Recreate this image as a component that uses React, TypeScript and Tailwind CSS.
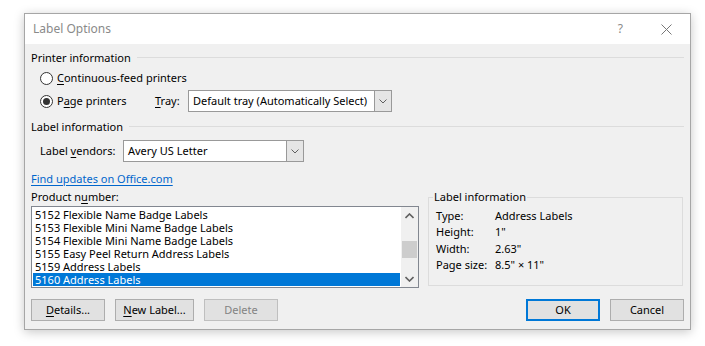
import React from 'react';

const Key = ({ children }: { children: React.ReactNode }) => (
  <span className="underline decoration-1 underline-offset-[2px]">{children}</span>
);

const SectionHeader = ({ title }: { title: string }) => (
  <div className="flex h-4 items-center">
    <span>{title}</span>
    <div className="ml-[6px] mt-[-1px] h-px flex-1 bg-[#dcdcdc]" />
  </div>
);

const Radio = ({ checked }: { checked?: boolean }) => (
  <span className="flex h-[13px] w-[13px] items-center justify-center rounded-full border border-[#333333] bg-white">
    {checked && <span className="h-[7px] w-[7px] rounded-full bg-[#333333]" />}
  </span>
);

const Chevron = ({ up }: { up?: boolean }) => (
  <svg width="9" height="6" viewBox="0 0 9 6" className="block">
    <path d={up ? 'M0.5 5 L4.5 1 L8.5 5' : 'M0.5 1 L4.5 5 L8.5 1'} fill="none" stroke="#606060" strokeWidth="1.6" />
  </svg>
);

const SmallChevron = () => (
  <svg width="8" height="5" viewBox="0 0 8 5" className="block">
    <path d="M0.5 0.5 L4 4 L7.5 0.5" fill="none" stroke="#606060" strokeWidth="1" />
  </svg>
);

const Combo = ({ value, className }: { value: string; className: string }) => (
  <div className={`flex h-[22px] border border-[#999999] bg-white ${className}`}>
    <span className="flex-1 truncate pl-[4px] leading-[20px]">{value}</span>
    <span className="flex w-[17px] items-center justify-center border-l border-[#999999] bg-[#e5e5e5]">
      <SmallChevron />
    </span>
  </div>
);

const products = [
  '5152 Flexible Name Badge Labels',
  '5153 Flexible Mini Name Badge Labels',
  '5154 Flexible Mini Name Badge Labels',
  '5155 Easy Peel Return Address Labels',
  '5159 Address Labels',
  '5160 Address Labels',
];

const details = [
  ['Type:', 'Address Labels'],
  ['Height:', '1"'],
  ['Width:', '2.63"'],
  ['Page size:', '8.5" × 11"'],
];

const Button = ({
  children,
  primary,
  disabled,
  className,
}: {
  children: React.ReactNode;
  primary?: boolean;
  disabled?: boolean;
  className: string;
}) => (
  <div
    className={`flex h-[22px] items-center justify-center bg-[#e1e1e1] ${
      primary ? 'border-2 border-[#0078d7]' : disabled ? 'border border-[#bfbfbf] text-[#838383]' : 'border border-[#adadad]'
    } ${className}`}
  >
    {children}
  </div>
);

export default function App() {
  return (
    <div className="h-[346px] w-[705px] overflow-hidden bg-white pl-[24px] pt-[13px] font-['Noto_Sans',sans-serif] text-[11px] leading-4 text-black">
      <div className="flex h-[317px] w-[667px] flex-col border border-[#a6a6a6] bg-[#f0f0f0] shadow-[0_2px_10px_rgba(0,0,0,0.22)]">
        {/* title bar */}
        <div className="flex h-[30px] items-center bg-white pl-[8px] text-[12px] text-[#8a8a8a]">
          <span className="flex-1">Label Options</span>
          <span className="mr-[38px]">?</span>
          <svg width="11" height="11" viewBox="0 0 11 11" className="mr-[18px]">
            <path d="M0.5 0.5 L10.5 10.5 M10.5 0.5 L0.5 10.5" stroke="#777777" strokeWidth="1" />
          </svg>
        </div>

        <div className="flex flex-1 flex-col px-[6px] pt-[6px]">
          <SectionHeader title="Printer information" />

          <div className="mt-[4px] flex h-4 items-center pl-[9px]">
            <Radio />
            <span className="ml-[4px]">
              <Key>C</Key>ontinuous-feed printers
            </span>
          </div>

          <div className="mt-[4px] flex h-[22px] items-center pl-[9px]">
            <Radio checked />
            <span className="ml-[4px] w-[98px]">
              P<Key>a</Key>ge printers
            </span>
            <span className="w-[33px]">
              <Key>T</Key>ray:
            </span>
            <Combo value="Default tray (Automatically Select)" className="w-[204px]" />
          </div>

          <div className="mt-[7px]">
            <SectionHeader title="Label information" />
          </div>

          <div className="mt-[5px] flex h-[22px] items-center pl-[9px]">
            <span className="w-[83px]">
              Label <Key>v</Key>endors:
            </span>
            <Combo value="Avery US Letter" className="w-[181px]" />
          </div>

          <div className="mt-[9px] flex h-4 items-center">
            <span className="text-[#0066cc] underline decoration-1 underline-offset-[2px]">Find updates on Office.com</span>
          </div>

          <div className="mt-[2px] flex">
            <div className="flex w-[388px] flex-col">
              <div className="flex h-4 items-center">
                <span>
                  Product n<Key>u</Key>mber:
                </span>
              </div>
              <div className="mt-[1px] flex h-[82px] border border-[#828790] bg-white">
                <div className="flex-1 py-px pl-px pr-[1px]">
                  {products.map((p, i) => (
                    <div
                      key={p}
                      className={`h-[13px] pl-[2px] leading-[13px] ${
                        i === products.length - 1 ? 'bg-[#0078d7] text-white' : ''
                      }`}
                    >
                      {p}
                    </div>
                  ))}
                </div>
                <div className="flex w-[17px] flex-col bg-[#f0f0f0]">
                  <div className="flex h-[17px] items-center justify-center">
                    <Chevron up />
                  </div>
                  <div className="mx-px mt-[17px] h-[17px] bg-[#cdcdcd]" />
                  <div className="flex-1" />
                  <div className="flex h-[17px] items-center justify-center">
                    <Chevron />
                  </div>
                </div>
              </div>
            </div>

            <fieldset className="ml-[9px] h-[97px] w-[255px] border border-[#dcdcdc] pl-[7px]">
              <legend className="ml-[-3px] px-[1px] leading-4">Label information</legend>
              <div className="pt-[3px]">
                {details.map(([k, v]) => (
                  <div key={k} className="flex h-[16.3px] items-center">
                    <span className="w-[59px]">{k}</span>
                    <span>{v}</span>
                  </div>
                ))}
              </div>
            </fieldset>
          </div>

          <div className="mt-[11px] flex">
            <Button className="w-[74px]">
              <span>
                <Key>D</Key>etails...
              </span>
            </Button>
            <Button className="ml-[10px] w-[79px]">
              <span>
                <Key>N</Key>ew Label...
              </span>
            </Button>
            <Button disabled className="ml-[10px] w-[74px]">
              Delete
            </Button>
            <div className="flex-1" />
            <Button primary className="w-[74px]">
              OK
            </Button>
            <Button className="ml-[10px] w-[74px]">Cancel</Button>
          </div>
        </div>
      </div>
    </div>
  );
}
